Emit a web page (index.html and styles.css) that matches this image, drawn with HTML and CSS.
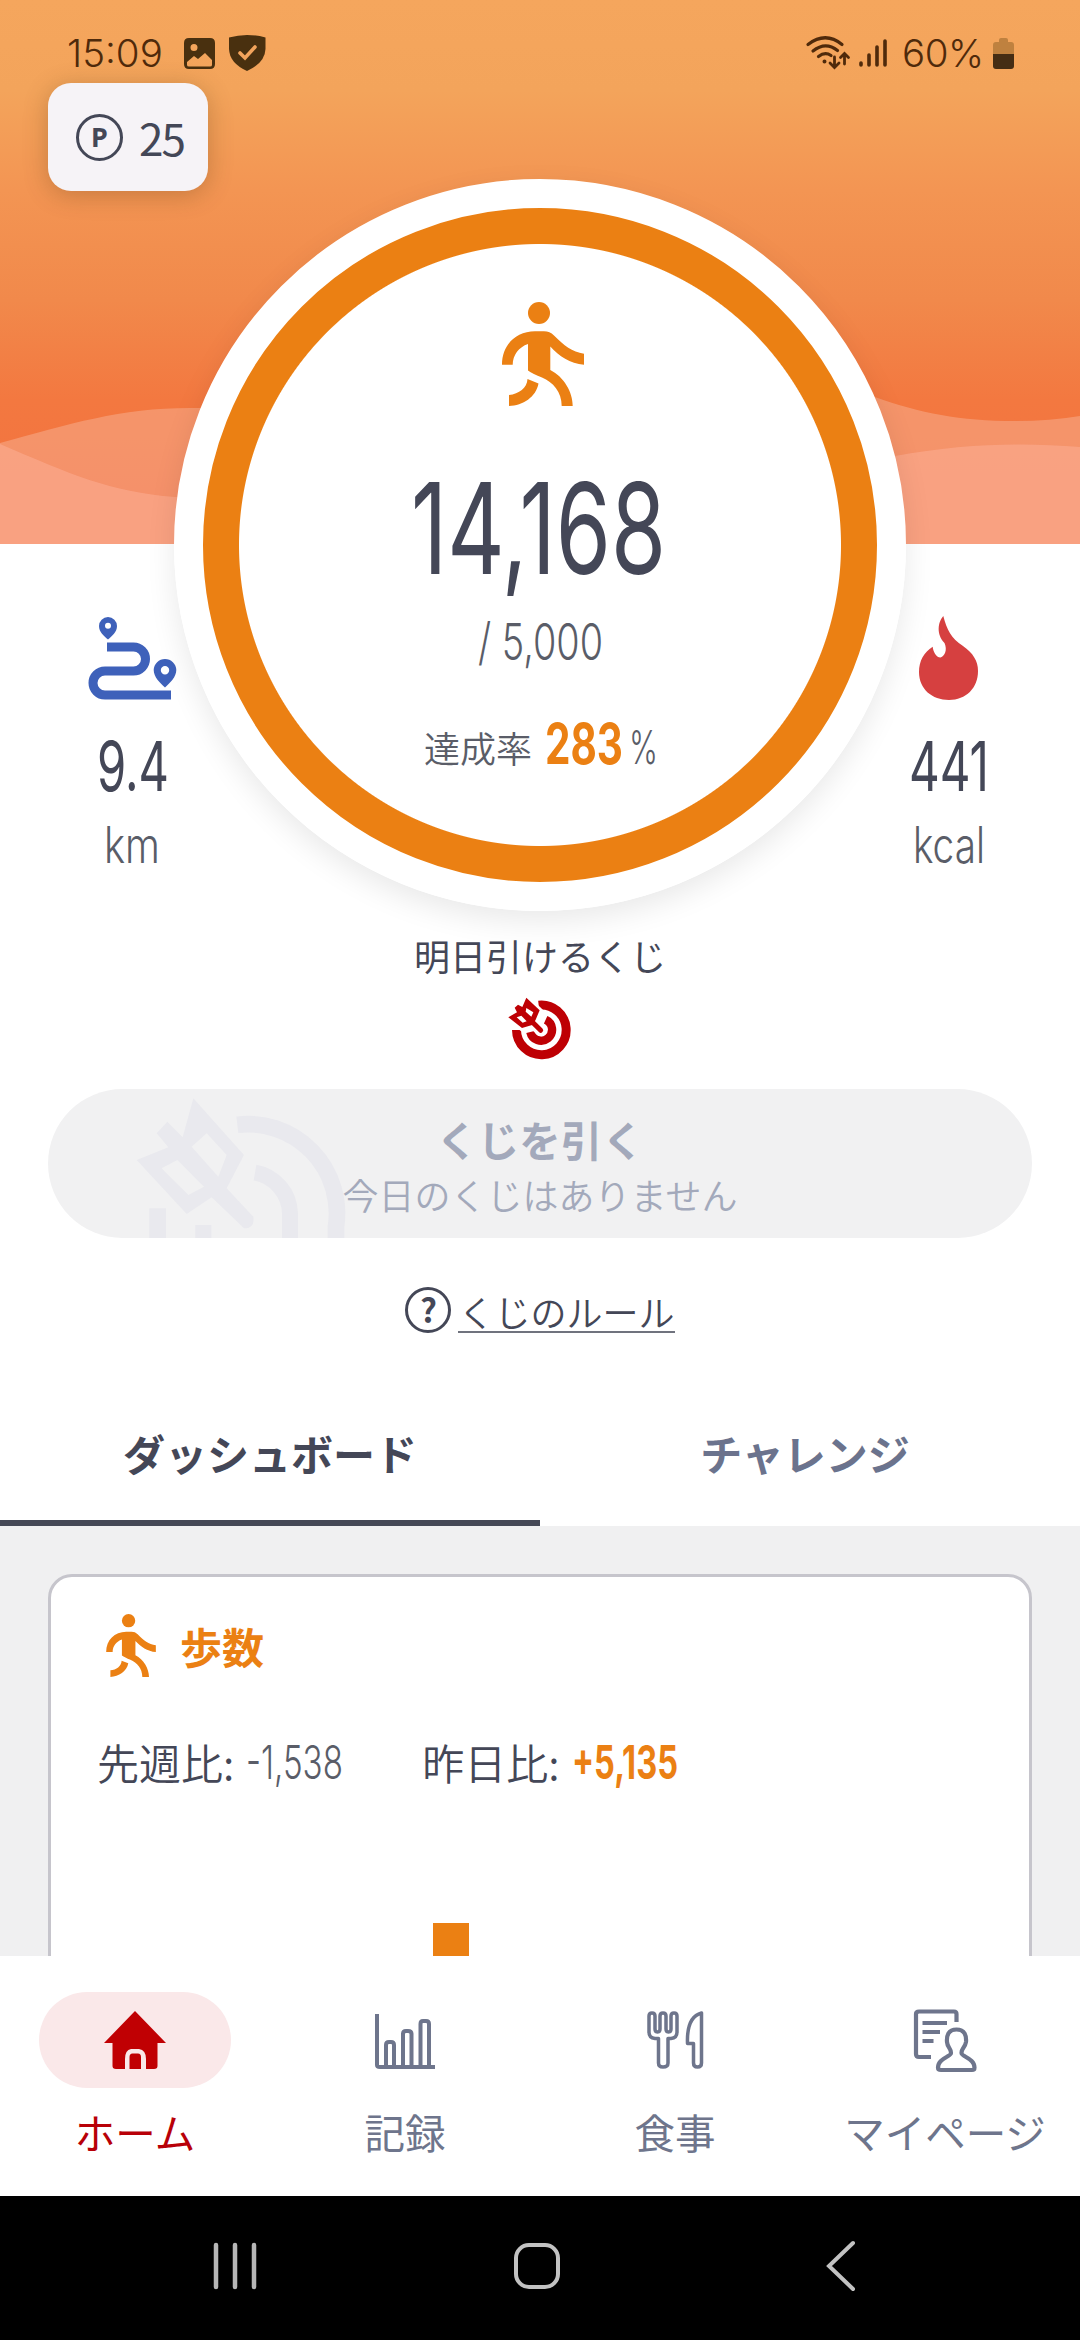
FILE: index.html
```html
<!DOCTYPE html>
<html lang="ja">
<head>
<meta charset="utf-8">
<title>ホーム</title>
<link rel="stylesheet" href="styles.css">
</head>
<body>
<svg class="defs" width="0" height="0" aria-hidden="true">
  <symbol id="walker" viewBox="0 0 82 104">
    <circle cx="37" cy="11" r="11"/>
    <path d="M0 62.7C0 43 14 29.3 33 29.3H42C46 29.3 49 30.5 52 33.5C62 43.5 70 50 82 51.7V62.7C68 61.5 57 54 48.3 44.4V68C62 75 70.7 90 70.7 104H59.7C59.7 90 51 80 40 75.5C34 73 29 71 26 68.5V42C17 45 10.7 53 10.7 62.7Z"/>
    <path d="M7 104V93C17 92 25 86 25.5 77L36.5 81.5C34 95 21 103.5 7 104Z"/>
  </symbol>
</svg>
<div class="page">
  <header class="hero">
    <svg class="waves" viewBox="0 0 1080 150" preserveAspectRatio="none">
      <path d="M0 49C70 30 120 14 190 14C400 14 700 -60 875 3C920 19 960 27 1015 27Q1050 27 1080 22V150H0Z" fill="#fff" fill-opacity=".22"/>
      <path d="M0 50C70 80 110 98 175 103C400 115 750 80 895 62C960 50 1020 48 1080 53V150H0Z" fill="#fba88b" fill-opacity=".7"/>
    </svg>
    <div class="status">
      <span class="clock">15:09</span>
      <svg class="st-img" width="31" height="31" viewBox="0 0 31 31"><path fill-rule="evenodd" d="M5 0H26Q31 0 31 5V26Q31 31 26 31H5Q0 31 0 26V5Q0 0 5 0ZM10 6A3.4 3.4 0 1 0 10 13A3.4 3.4 0 1 0 10 6ZM3 24V27Q3 28.5 5 28.5H26Q28 28.5 28 27V22L21 15L14 21L10 18Z"/></svg>
      <svg class="st-shield" width="37" height="36" viewBox="0 0 37 36"><path d="M18 0Q27 0 36.500 2.500V14Q36 28 18 36Q.5 28 0 14V2.500Q9 0 18 0Z"/><path d="M11 18L16 23L26 12" fill="none" stroke="#f3a45c" stroke-width="3.600" stroke-linecap="round"/></svg>
      <span class="grow"></span>
      <svg class="st-wifi" width="46" height="34" viewBox="0 0 46 34" fill="none" stroke="#4f2a0b" stroke-width="3.200" stroke-linecap="round"><path d="M2 8.500Q19.500 -5 36 8.500M7 15Q19.500 5 31.500 14.500M12.500 20.500Q19 15.500 25 19.500"/><path d="M28.500 21V31M24 27L28.500 31.500L33 27M38.500 28V18M34.500 21.500L38.500 17.500L42.500 21.500" stroke-width="2.800"/><circle cx="18.500" cy="25.500" r="1" stroke-width="2"/></svg>
      <svg class="st-signal" width="28" height="30" viewBox="0 0 28 30" stroke="#4f2a0b" stroke-width="3.600" stroke-linecap="round"><path d="M2 25V27M10 17V27M18 9V27M26 3V27"/></svg>
      <span class="percent">60%</span>
      <svg class="st-batt" width="21" height="31" viewBox="0 0 21 31"><path d="M6 2Q6 0 8 0H13Q15 0 15 2V4H18Q21 4 21 7V16H0V7Q0 4 3 4H6Z" fill="#bf813f"/><path d="M0 16H21V28Q21 31 18 31H3Q0 31 0 28Z" fill="#452d14"/></svg>
    </div>
    <div class="points"><span class="p-mark">P</span><span class="p-value">25</span></div>
  </header>

  <section class="metrics">
    <div class="metric">
      <svg class="route" width="90" height="84" viewBox="88 615 90 84" fill="#3e61ba"><path d="M107 646H133.500A12 12 0 0 1 133.500 670H105A12 12 0 0 0 105 694H171" fill="none" stroke="#3e61ba" stroke-width="9"/><path fill-rule="evenodd" d="M108 616A9 9 0 0 1 117 625C117 631 112 635 108 638.500C104 635 99 631 99 625A9 9 0 0 1 108 616ZM108 621.700A3 3 0 1 0 108 627.700A3 3 0 1 0 108 621.700Z"/><path fill-rule="evenodd" d="M165 658A11.300 11.300 0 0 1 176.300 669C176.300 676 170 682 165 686.500C160 682 153.700 676 153.700 669A11.300 11.300 0 0 1 165 658ZM165 665A4.200 4.200 0 1 0 165 673.400A4.200 4.200 0 1 0 165 665Z"/></svg>
      <svg class="num" width="90" height="80"><text class="cond" x="10" y="61" font-size="69" textLength="72" lengthAdjust="spacingAndGlyphs">9.4</text></svg>
      <svg class="unit" width="90" height="70"><text class="cond soft" x="17" y="53" font-size="50" textLength="56" lengthAdjust="spacingAndGlyphs">km</text></svg>
    </div>
    <div class="metric">
      <svg width="59" height="84" viewBox="0 0 59 84" fill="#d64040"><path d="M24.300 0C28 14 32 22 44 30C54 37 59 45 59 55C59 72 47 84 30 84C13 84 0 73 0 56C0 45 5 36 13.700 30.700C14 35 17 41.500 21.500 41.500C26 40 28.500 34 25.500 27C17 18 19 6 24.300 0Z"/></svg>
      <svg class="num" width="90" height="80"><text class="cond" x="6" y="61" font-size="69" textLength="80" lengthAdjust="spacingAndGlyphs">441</text></svg>
      <svg class="unit" width="90" height="70"><text class="cond soft" x="10" y="53" font-size="50" textLength="72" lengthAdjust="spacingAndGlyphs">kcal</text></svg>
    </div>
  </section>

  <div class="dial">
    <svg class="dial-icon" width="82" height="104"><use href="#walker"/></svg>
    <svg class="steps" width="280" height="130"><text class="cond" x="13" y="104" font-size="126" textLength="255" lengthAdjust="spacingAndGlyphs">14,168</text></svg>
    <svg class="goal" width="140" height="60"><text class="cond soft" x="8" y="48" font-size="51" textLength="125" lengthAdjust="spacingAndGlyphs">/ 5,000</text></svg>
    <div class="rate">
      <span>達成率</span>
      <svg width="80" height="60"><text class="cond hot" x="1" y="51" font-size="57" textLength="78" lengthAdjust="spacingAndGlyphs">283</text></svg>
      <svg width="30" height="60"><text class="cond soft" x="0" y="51" font-size="47" textLength="29" lengthAdjust="spacingAndGlyphs">%</text></svg>
    </div>
  </div>

  <section class="lottery">
    <p class="tomorrow">明日引けるくじ</p>
    <svg class="target" width="90" height="90" viewBox="0 0 270 270" fill="#be0004"><path d="M131 57.500A74.500 74.500 0 1 1 64.500 132" fill="none" stroke="#be0004" stroke-width="27"/><path d="M152 101A33 33 0 1 1 106 138" fill="none" stroke="#be0004" stroke-width="25"/><path d="M94 33L136 74L124 103L80 128L38 94L60 72Z" fill="#fff" stroke="#fff" stroke-width="14"/><path d="M112 108L138 134" stroke="#fff" stroke-width="34" stroke-linecap="round"/><path d="M112 108L137 133" stroke="#be0004" stroke-width="15" stroke-linecap="round"/><path fill-rule="evenodd" d="M94 35L134 73L122 101L114 116L81 126L40 94L66 79L59 65L69 56L82 63ZM94 66L92 77L109 92L115 79ZM65 94L83 110L95 106L79 89Z"/></svg>
    <button class="draw">
      <svg class="draw-mark" width="320" height="149" viewBox="24 27 960 447" fill="#e9e9ee"><path d="M592 134A268 268 0 0 1 888 440V500M353 500V385" fill="none" stroke="#e9e9ee" stroke-width="50"/><path d="M645 278A127 127 0 0 1 750 400V500M490 500V435" fill="none" stroke="#e9e9ee" stroke-width="48"/><path fill-rule="evenodd" d="M460 55L612 225L560 325L640 410Q645 445 612 445L515 352L440 402L290 240L385 202L350 160L382 125L428 172ZM500 160L455 200L535 290L560 225ZM365 265L445 345L492 320L412 240Z"/></svg>
      <strong>くじを引く</strong>
      <span>今日のくじはありません</span>
    </button>
    <a class="rule"><span class="q">?</span><span class="rule-text">くじのルール</span></a>
  </section>

  <nav class="tabs"><span class="tab on">ダッシュボード</span><span class="tab">チャレンジ</span></nav>

  <main class="board">
    <article class="card">
      <h2><svg width="50" height="63"><use href="#walker"/></svg>歩数</h2>
      <div class="diff">
        <span>先週比:</span><svg class="d1" width="100" height="60"><text class="cond soft" x="0" y="48" font-size="46.500" textLength="97" lengthAdjust="spacingAndGlyphs">-1,538</text></svg>
        <span>昨日比:</span><svg class="d2" width="110" height="60"><text class="cond hot" x="0" y="48" font-size="46.500" textLength="106" lengthAdjust="spacingAndGlyphs">+5,135</text></svg>
      </div>
      <div class="chart"><i class="bar"></i></div>
    </article>
  </main>

  <nav class="bottom">
    <a class="item on"><span class="pill"><svg width="62" height="62" viewBox="104 2009 62 62"><path d="M135 2011L166 2043H157.500V2066Q157.500 2069 154 2069H146V2059Q146 2050 139 2049H131Q125 2050 125 2059V2069H116Q112.500 2069 112.500 2066V2043H104Z" fill="#c00003"/><path d="M129.500 2069V2057Q129.500 2053.500 132.500 2053.500H138Q141 2053.500 141 2057V2069Z" fill="#c00003"/></svg></span>ホーム</a>
    <a class="item"><span class="pill"><svg width="64" height="64" viewBox="373 2008 64 64" fill="none" stroke="#6e758c" stroke-width="4"><path d="M377 2014V2065Q377 2067 380 2067H435M386 2067V2045Q386 2042 389 2042H391Q394 2042 394 2045V2067M403 2067V2034Q403 2031 406 2031H408Q411.500 2031 411.500 2034V2067M420.500 2067V2024Q420.500 2021 423 2021H426Q429 2021 429 2024V2067"/></svg></span>記録</a>
    <a class="item"><span class="pill"><svg width="64" height="64" viewBox="643 2008 64 64" fill="none" stroke="#6e758c" stroke-width="3.500" stroke-linejoin="round"><path d="M649 2016Q649 2013 652 2013Q655 2013 655 2016V2029Q655 2032 657.500 2032Q660 2032 660 2029V2016Q660 2013 663 2013Q666 2013 666 2016V2029Q666 2032 668.500 2032Q671 2032 671 2029V2016Q671 2013 674 2013Q677 2013 677 2016V2032Q677 2038 671 2038.500H668V2063Q668 2067 663 2067Q658.500 2067 658.500 2063V2038.500H655Q649 2038 649 2032Z"/><path d="M701.500 2013V2063Q701.500 2067 697.500 2067Q693.500 2067 693.500 2063V2043.500H687.500Q686.500 2017 701.500 2013Z"/></svg></span>食事</a>
    <a class="item"><span class="pill"><svg width="66" height="66" viewBox="912 2006 66 66" fill="none" stroke="#6e758c" stroke-width="4.200"><path d="M956.500 2021V2013Q956.500 2010.500 954 2010.500H919Q916 2010.500 916 2013V2053Q916 2056 919 2056H931M922.500 2022H947M922.500 2031H940M922.500 2040H933.500"/><path d="M956.500 2028.500C948 2028.500 946.500 2035 947 2041C947.500 2047 951 2047 951 2052C951 2056 938 2057 938 2066.500Q938 2069 941 2069H972Q974.500 2069 974.500 2066.500C974.500 2057 961.500 2056 961.500 2052C961.500 2047 965 2047 966 2041C966.500 2035 965 2028.500 956.500 2028.500Z"/></svg></span>マイページ</a>
  </nav>

  <footer class="sys">
    <svg width="44" height="48" viewBox="0 0 44 48" stroke="#b6b6b6" stroke-width="4.500" stroke-linecap="round"><path d="M3 3V45M22 3V45M41 3V45"/></svg>
    <svg width="48" height="48" viewBox="0 0 48 48" fill="none" stroke="#c2c2c2" stroke-width="4"><rect x="3" y="3" width="42" height="42" rx="13"/></svg>
    <svg width="32" height="52" viewBox="0 0 32 52" fill="none" stroke="#c2c2c2" stroke-width="4" stroke-linecap="round"><path d="M28 3L4 26L28 49"/></svg>
  </footer>
</div>
</body>
</html>
```
FILE: styles.css
```css
* { box-sizing: border-box; }
body {
  margin: 0;
  background: #fff;
  color: #444757;
  font-family: "Noto Sans CJK JP", sans-serif;
  font-size: 36px;
}
svg { display: block; flex: none; overflow: visible; }
.defs { position: absolute; }
p, h2 { margin: 0; }
.page {
  position: relative;
  display: flex;
  flex-direction: column;
  width: 1080px;
  height: 2340px;
  overflow: hidden;
}
.cond { font-family: Inter, sans-serif; fill: #444757; }
.soft { fill: #5a5d68; font-weight: 350; }
.hot { fill: #eb8013; font-weight: 700; }

/* hero */
.hero {
  position: relative;
  flex: none;
  height: 544px;
  background: linear-gradient(#f5a65d 0, #f3a45b 90px, #f39553 190px, #f1894b 300px, #f37840 400px, #f27040 544px);
}
.waves { position: absolute; left: 0; bottom: 0; width: 1080px; height: 150px; overflow: hidden; }
.status {
  position: relative;
  display: flex;
  align-items: center;
  height: 83px;
  padding: 23px 66px 0 67px;
  font-family: Inter, sans-serif;
  font-size: 38.500px;
  font-weight: 350;
  line-height: 60px;
  color: #4f2a0b;
  fill: #49300f;
}
.clock { width: 117px; }
.st-shield { margin-left: 14px; }
.grow { flex: 1; }
.st-signal { margin-left: 7px; }
.percent { width: 83px; margin: 0 8px 0 15px; letter-spacing: -.5px; }
.points {
  position: relative;
  display: flex;
  align-items: center;
  gap: 16px;
  width: 160px;
  height: 108px;
  margin-left: 48px;
  padding-left: 28px;
  border-radius: 23px;
  background: #f6f3f7;
  box-shadow: 0 4px 24px rgba(90, 60, 20, .3);
  font-size: 44px;
  line-height: 1;
}
.p-value { letter-spacing: -2px; }
.p-mark {
  width: 47px;
  height: 47px;
  border: 3px solid #444757;
  border-radius: 50%;
  font: 700 27px/40px "Noto Sans", sans-serif;
  text-align: center;
}

/* dial */
.dial {
  position: absolute;
  left: 174px;
  top: 179px;
  display: flex;
  flex-direction: column;
  align-items: center;
  width: 732px;
  height: 732px;
  padding-top: 94px;
  border: 29px solid #fff;
  border-radius: 50%;
  background: radial-gradient(circle closest-side, #fff 300.500px, #eb8013 301.500px);
  box-shadow: 0 10px 30px rgba(0, 0, 0, .09);
}
.dial-icon { fill: #eb8013; margin-left: 6px; }
.steps { margin: 64px 4px 0 0; }
.goal { margin-top: 12px; }
.rate { display: flex; align-items: center; height: 60px; margin: 41px 0 0 3px; font-weight: 350; color: #5a5d68; }
.rate span { width: 120px; padding-top: 8px; }
.rate svg + svg { margin-left: 5px; }

/* side metrics */
.metrics { display: flex; justify-content: space-between; height: 384px; padding-top: 72px; }
.metric { display: flex; flex-direction: column; align-items: center; width: 264px; }
.route { margin-left: 2px; }
.num { margin-top: 30px; }

/* lottery */
.lottery { display: flex; flex-direction: column; align-items: center; height: 456px; }
.tomorrow { line-height: 54px; }
.target { margin: 4px 0 0 0; }
.draw {
  position: relative;
  overflow: hidden;
  flex: none;
  display: flex;
  flex-direction: column;
  align-items: center;
  width: 984px;
  height: 149px;
  margin-top: 13px;
  padding: 22px 0 0;
  border: 0;
  border-radius: 75px;
  background: #f1f1f2;
  color: #a3a9bb;
  font: 350 36px/54px "Noto Sans CJK JP", sans-serif;
}
.draw strong, .draw span { position: relative; }
.draw strong { font-size: 41.500px; font-weight: 700; line-height: 56px; }
.draw-mark { position: absolute; left: 0; top: 0; }
.rule { display: flex; align-items: center; gap: 7px; height: 48px; margin-top: 48px; font-weight: 350; }
.q {
  width: 46px;
  height: 46px;
  border: 3.500px solid #444757;
  border-radius: 50%;
  font: 700 33px/39px "Noto Sans CJK JP", sans-serif;
  text-align: center;
}
.rule-text { height: 42px; line-height: 40px; border-bottom: 2px solid #70737e; margin-top: 3px; }

/* tabs */
.tabs { display: flex; flex: none; height: 142px; font-size: 42px; font-weight: 700; line-height: 138px; text-align: center; }
.tab { width: 540px; height: 142px; padding-right: 10px; color: #6b738d; }
.tab.on { padding-right: 0; color: #444757; border-bottom: 6px solid #454856; }

/* dashboard */
.board { flex: none; height: 430px; padding: 48px 48px 0; background: #f0f0f1; overflow: hidden; }
.card { height: 460px; border: 3px solid #c6c5cc; border-radius: 24px; background: #fff; }
.card h2 {
  display: flex;
  align-items: center;
  gap: 24px;
  height: 63px;
  margin: 37px 0 0 55px;
  font-size: 42px;
  color: #eb8013;
  fill: #eb8013;
}
.diff { display: flex; align-items: center; height: 60px; margin: 54px 0 0 46px; font-size: 42px; font-weight: 350; }
.d1 { margin: 0 76px 0 12px; }
.d2 { margin-left: 12px; }
.chart { display: flex; align-items: flex-end; height: 175px; }
.bar { width: 36px; height: 43px; margin-left: 382px; background: #eb8013; }

/* bottom navigation */
.bottom { display: flex; flex: none; height: 240px; padding-top: 36px; background: #fff; color: #6e758c; font-size: 40.500px; }
.item { display: flex; flex-direction: column; align-items: center; width: 270px; line-height: 60px; white-space: nowrap; }
.pill { display: flex; align-items: center; justify-content: center; width: 192px; height: 96px; margin-bottom: 14px; border-radius: 48px; }
.on .pill { background: #fae8e9; }
.item.on { color: #b80008; }

.sys { display: flex; flex: none; align-items: center; height: 144px; padding-left: 213px; padding-bottom: 5px; background: #000; }
.sys svg:nth-child(2) { margin: 0 264px 0 256px; }
```
